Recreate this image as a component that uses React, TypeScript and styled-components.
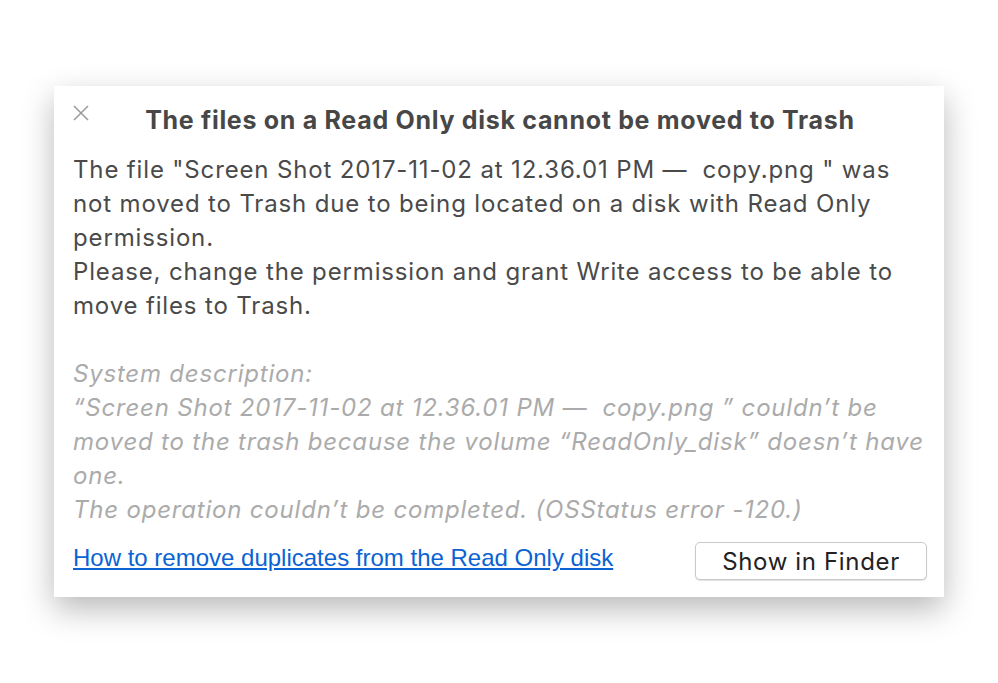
import React from 'react';
import styled, { createGlobalStyle } from 'styled-components';

const GlobalStyle = createGlobalStyle`
    html, body {
        margin: 0;
        padding: 0;
        background: #ffffff;
    }
    body {
        font-family: Inter, "Liberation Sans", Arial, sans-serif;
    }
`;

const Page = styled.div`
    display: flex;
    justify-content: center;
    padding-top: 86px;
    width: 998px;
    height: 683px;
    box-sizing: border-box;
`;

const Dialog = styled.div`
    width: 890px;
    height: 511px;
    box-sizing: border-box;
    background: #ffffff;
    box-shadow: 0 12px 30px rgba(0, 0, 0, 0.28);
    padding: 17px 17px 17px 19px;
    display: flex;
    flex-direction: column;
`;

const Header = styled.div`
    position: relative;
    display: flex;
    justify-content: center;
    align-items: center;
    height: 34px;
`;

const CloseButton = styled.button`
    position: absolute;
    left: 0;
    top: 2px;
    width: 16px;
    height: 16px;
    padding: 0;
    border: none;
    background: none;
    cursor: pointer;
    display: flex;
`;

const Title = styled.h1`
    margin: 0;
    font-size: 25px;
    font-weight: 700;
    letter-spacing: 0.7px;
    color: #474747;
    white-space: nowrap;
`;

const Message = styled.p`
    margin: 16px 0 0;
    font-size: 24px;
    letter-spacing: 0.85px;
    line-height: 34px;
    color: #4a4a4a;
    white-space: pre;
`;

const SystemNote = styled.p`
    margin: 34px 0 0;
    font-size: 24px;
    letter-spacing: 0.8px;
    line-height: 34px;
    font-style: italic;
    color: #ababab;
    white-space: pre;
`;

const Footer = styled.div`
    margin-top: auto;
    display: flex;
    justify-content: space-between;
    align-items: center;
`;

const HelpLink = styled.a`
    font-family: "Liberation Sans", Arial, sans-serif;
    font-size: 24px;
    color: #0b63d3;
    text-decoration: underline;
    margin-bottom: 6px;
`;

const FinderButton = styled.button`
    width: 232px;
    height: 38px;
    border: 1px solid #c9c9c9;
    border-radius: 5px;
    background: #ffffff;
    box-shadow: 0 1px 1px rgba(0, 0, 0, 0.12);
    font-family: Inter, "Liberation Sans", Arial, sans-serif;
    font-size: 24px;
    letter-spacing: 0.65px;
    color: #222222;
    cursor: pointer;
`;

const CloseIcon = () => (
    <svg width="16" height="16" viewBox="0 0 16 16">
        <path d="M1 1 L15 15 M15 1 L1 15" stroke="#9a9a9a" strokeWidth="1.5" fill="none" />
    </svg>
);

const App = () => {
    return (
        <>
            <GlobalStyle />
            <Page>
                <Dialog>
                    <Header>
                        <CloseButton aria-label="close"><CloseIcon /></CloseButton>
                        <Title>The files on a Read Only disk cannot be moved to Trash</Title>
                    </Header>
                    <Message>
                        {'The file "Screen Shot 2017-11-02 at 12.36.01 PM —  copy.png " was\n'}
                        {'not moved to Trash due to being located on a disk with Read Only\n'}
                        {'permission.\n'}
                        {'Please, change the permission and grant Write access to be able to\n'}
                        {'move files to Trash.'}
                    </Message>
                    <SystemNote>
                        {'System description:\n'}
                        {'“Screen Shot 2017-11-02 at 12.36.01 PM —  copy.png ” couldn’t be\n'}
                        {'moved to the trash because the volume “ReadOnly_disk” doesn’t have\n'}
                        {'one.\n'}
                        {'The operation couldn’t be completed. (OSStatus error -120.)'}
                    </SystemNote>
                    <Footer>
                        <HelpLink href="#">How to remove duplicates from the Read Only disk</HelpLink>
                        <FinderButton>Show in Finder</FinderButton>
                    </Footer>
                </Dialog>
            </Page>
        </>
    );
};

export default App;
